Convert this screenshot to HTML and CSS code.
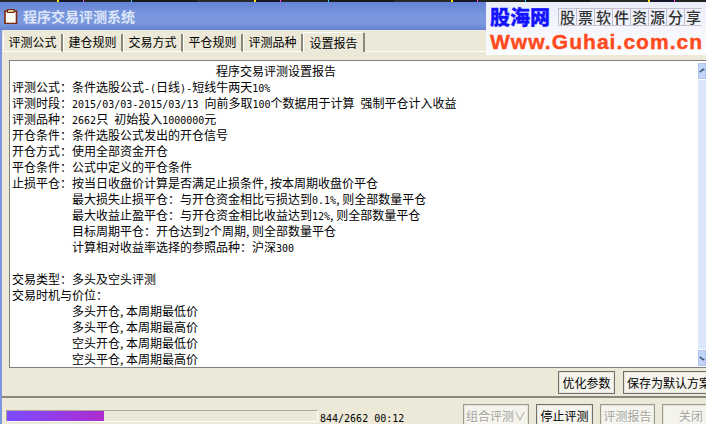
FILE: index.html
```html
<!DOCTYPE html>
<html lang="zh">
<head>
<meta charset="utf-8">
<title>程序交易评测系统</title>
<link rel="stylesheet" href="styles.css">
</head>
<body>
<div class="window">
  <div class="noise"></div>
  <header class="titlebar">
    <svg class="app-icon" width="14" height="15" viewBox="0 0 14 15"><rect x="1" y="2" width="11.5" height="12.5" fill="#fdfcf4" stroke="#7a2a10" stroke-width="1.6"/><rect x="3.5" y="0.5" width="6.5" height="3" fill="#d8c9a0" stroke="#7a2a10"/></svg>
    <span class="title">程序交易评测系统</span>
  </header>
  <div class="body">
    <nav class="tabs">
      <span class="tab">评测公式</span>
      <span class="tab">建仓规则</span>
      <span class="tab">交易方式</span>
      <span class="tab">平仓规则</span>
      <span class="tab">评测品种</span>
      <span class="tab active">设置报告</span>
      <span class="tab-rest"></span>
    </nav>
    <main class="panel">
      <div class="report">
        <div class="report-text">
          <p class="report-title">程序交易评测设置报告</p>
          <p>评测公式<span class="colon">：</span>条件选股公式<span class="n">-(</span>日线<span class="n">)-</span>短线牛两天<span class="n">10%</span></p>
          <p>评测时段<span class="colon">：</span><span class="n">2015/03/03-2015/03/13 </span>向前多取<span class="n">100</span>个数据用于计算<span class="n"> </span>强制平仓计入收益</p>
          <p>评测品种<span class="colon">：</span><span class="n">2662</span>只<span class="n"> </span>初始投入<span class="n">1000000</span>元</p>
          <p>开仓条件<span class="colon">：</span>条件选股公式发出的开仓信号</p>
          <p>开仓方式<span class="colon">：</span>使用全部资金开仓</p>
          <p>平仓条件<span class="colon">：</span>公式中定义的平仓条件</p>
          <p>止损平仓<span class="colon">：</span>按当日收盘价计算是否满足止损条件, 按本周期收盘价平仓</p>
          <p class="ind">最大损失止损平仓<span class="colon">：</span>与开仓资金相比亏损达到<span class="n">0.1%</span>, 则全部数量平仓</p>
          <p class="ind">最大收益止盈平仓<span class="colon">：</span>与开仓资金相比收益达到<span class="n">12%</span>, 则全部数量平仓</p>
          <p class="ind">目标周期平仓<span class="colon">：</span>开仓达到<span class="n">2</span>个周期, 则全部数量平仓</p>
          <p class="ind">计算相对收益率选择的参照品种<span class="colon">：</span>沪深<span class="n">300</span></p>
          <p>&nbsp;</p>
          <p>交易类型<span class="colon">：</span>多头及空头评测</p>
          <p>交易时机与价位<span class="colon">：</span></p>
          <p class="ind">多头开仓, 本周期最低价</p>
          <p class="ind">多头平仓, 本周期最高价</p>
          <p class="ind">空头开仓, 本周期最低价</p>
          <p class="ind">空头平仓, 本周期最高价</p>
        </div>
        <div class="scrollbar">
          <span class="sb-btn"><svg width="8" height="8" viewBox="0 0 8 8"><path d="M1 5.5 L5.5 1.5 L7 3" fill="none" stroke="#33507f" stroke-width="1.8"/></svg></span>
          <span class="sb-track"></span>
          <span class="sb-btn"><svg width="8" height="8" viewBox="0 0 8 8"><path d="M1 2.5 L5.5 6.5 L7 5" fill="none" stroke="#33507f" stroke-width="1.8"/></svg></span>
        </div>
      </div>
      <div class="report-actions">
        <button class="btn btn-dark">优化参数</button>
        <button class="btn btn-save">保存为默认方案</button>
      </div>
    </main>
    <footer class="footer">
      <div class="progress"><div class="progress-fill"></div></div>
      <span class="status">844/2662 00:12</span>
      <div class="footer-actions">
        <button class="btn btn-off btn-combo">组合评测∨</button>
        <button class="btn btn-dark">停止评测</button>
        <button class="btn btn-off btn-report">评测报告</button>
        <button class="btn btn-off btn-close">关闭</button>
      </div>
    </footer>
  </div>
  <aside class="logo">
    <div class="logo-top"><span class="logo-name">股海网</span><span class="logo-slogan"><i>股</i><i>票</i><i>软</i><i>件</i><i>资</i><i>源</i><i>分</i><i>享</i></span></div>
    <div class="logo-url">Www.Guhai.com.cn</div>
  </aside>
</div>
</body>
</html>
```
FILE: styles.css
```css
* { box-sizing: border-box; }
html, body { margin: 0; padding: 0; }
body { width: 706px; height: 424px; overflow: hidden; font-family: "Noto Sans CJK SC", "Liberation Sans", sans-serif; font-size: 12px; color: #000; }
.window { position: relative; width: 706px; height: 424px; display: flex; flex-direction: column; background: #ece9d8; overflow: hidden; }
.noise { height: 2px; flex: none; background: repeating-linear-gradient(90deg, #2a2a2a 0 57px, #ffe000 57px 59px, #16162a 59px 83px, #ff40ff 83px 84px, #222 84px 131px, #30d0ff 131px 132px, #181818 132px 197px); }
.titlebar { height: 28px; flex: none; display: flex; align-items: center; gap: 5px; padding-left: 4px; background: linear-gradient(180deg, #6583d6 0%, #7b98de 50%, #7b98de 75%, #6583d2 100%); }
.app-icon { flex: none; }
.title { font-size: 14px; font-weight: 700; color: #dce6f8; }
.body { height: 394px; flex: none; display: flex; flex-direction: column; border-left: 2px solid #7b98de; }
.tabs { height: 22px; flex: none; display: flex; align-items: flex-end; padding-left: 1px; background: #ece9d8; }
.tab { width: 60px; height: 18px; line-height: 16px; text-align: center; font-size: 12px; border-left: 1px solid #fff; border-right: 2px solid #8a8878; border-bottom: 1px solid #fff; }
.tab.active { height: 20px; line-height: 19px; width: 62px; border-top: 1px solid #fff; border-bottom: none; border-radius: 2px 2px 0 0; }
.tab-rest { flex: 1; border-bottom: 1px solid #fff; height: 1px; }
.panel { height: 344px; flex: none; display: flex; flex-direction: column; padding: 8px 0 0 7px; }
.report { height: 308px; flex: none; display: flex; background: #fff; border: 1px solid #808080; border-right: none; }
.report-text { flex: 1; min-width: 0; padding: 2px 0 0 2px; overflow: hidden; }
.report-text p { margin: 0; height: 16px; line-height: 16px; white-space: nowrap; font-size: 12px; }
.report-text .report-title { padding-left: 204px; }
.report-text .ind { padding-left: 60px; }
.colon { font-family: "Noto Sans CJK TC", sans-serif; }
.n { font-family: "DejaVu Sans Mono", monospace; font-size: 10px; white-space: pre; }
.scrollbar { width: 8px; flex: none; display: flex; flex-direction: column; padding: 2px 0 1px; }
.sb-btn { height: 16px; flex: none; display: flex; align-items: center; justify-content: center; background: #c3d5fa; border: 1px solid #adc2ee; overflow: hidden; }
.sb-track { flex: 1; background: #dde7fb; margin: 1px 0; }
.report-actions { display: flex; gap: 8px; padding: 3px 0 0 549px; }
.btn { height: 23px; flex: none; padding: 0; font: inherit; font-size: 12px; background: #f4f3ec; color: #000; border: 1px solid #6f6f6f; box-shadow: inset 0 0 0 1px #e6e4d8; white-space: nowrap; }
.btn-dark { width: 57px; }
.btn-save { width: 90px; text-align: left; padding-left: 3px; }
.footer { height: 28px; flex: none; display: flex; align-items: flex-start; border-top: 2px solid #8b897c; padding: 6px 0 0 4px; }
.progress { width: 312px; height: 12px; flex: none; margin-top: 6px; border: 1px solid #aca899; border-right-color: #fff; border-bottom-color: #fff; }
.progress-fill { width: 97px; height: 100%; background: linear-gradient(90deg, #7a4cff, #ae2cce); }
.status { width: 145px; flex: none; padding: 8px 0 0 2px; line-height: 14px; font-family: "DejaVu Sans Mono", monospace; font-size: 10px; white-space: nowrap; }
.footer-actions { display: flex; gap: 7px; }
.btn-off { color: #a3a39b; border-color: #9a9a8e; text-shadow: 1px 1px 0 #fff; }
.btn-combo { width: 66px; }
.btn-report { width: 55px; }
.btn-close { width: 50px; text-align: left; padding-left: 16px; }
.logo { position: absolute; top: 2px; right: 0; width: 220px; height: 53px; background: linear-gradient(180deg, #e9edf9 0%, #f4f6fc 50%, #fdfdfe 100%); padding: 3px 0 0 4px; overflow: hidden; }
.logo-top { display: flex; align-items: center; height: 24px; gap: 8px; }
.logo-name { font-size: 20px; font-weight: 900; color: #1414ff; line-height: 24px; white-space: nowrap; -webkit-text-stroke: 0.3px #1414ff; }
.logo-slogan { display: flex; }
.logo-slogan i { width: 18px; height: 18px; line-height: 16px; font-style: normal; font-size: 15px; font-weight: 500; color: #333; text-align: center; border: 1px solid #c6bfd0; border-right: none; }
.logo-url { margin-top: 2px; font-family: "Liberation Sans", sans-serif; font-weight: 700; font-size: 21px; line-height: 22px; color: #ff4a1c; letter-spacing: 1.05px; white-space: nowrap; -webkit-text-stroke: 0.4px #ff4a1c; }
```
